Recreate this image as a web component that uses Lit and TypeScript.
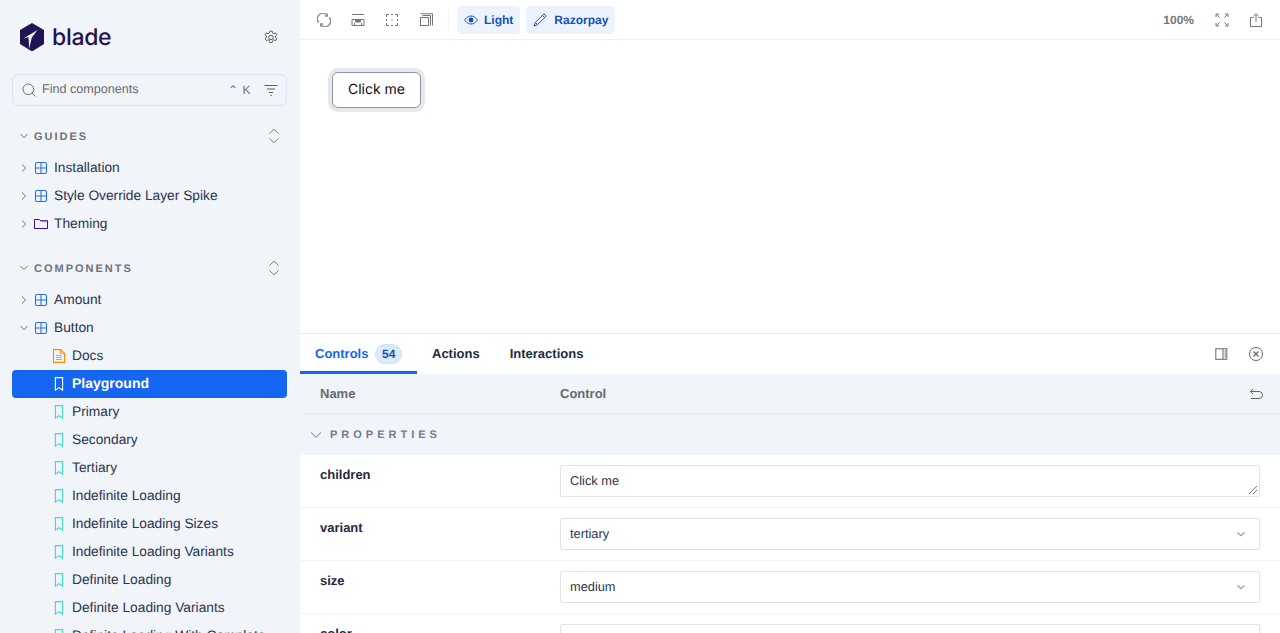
import { LitElement, html, css, svg } from "lit";
import { customElement } from "lit/decorators.js";

const chevR = html`<svg class="chev" width="10" height="10" viewBox="0 0 10 10"><path d="M3 1.500 6.600 5 3 8.500" fill="none" stroke="#6b7280" stroke-width="1"/></svg>`;
const chevD = html`<svg class="chev" width="10" height="10" viewBox="0 0 10 10"><path d="M1.500 3 5 6.600 8.500 3" fill="none" stroke="#6b7280" stroke-width="1"/></svg>`;
const grid = html`<svg class="ic" width="14" height="14" viewBox="0 0 14 14"><rect x="1.500" y="1.500" width="11" height="11" rx="1.500" fill="none" stroke="#2a6fe8" stroke-width="1.100"/><path d="M7 1.500v11M1.500 7h11" stroke="#2a6fe8" stroke-width="1.100"/></svg>`;
const folder = html`<svg class="ic" width="14" height="14" viewBox="0 0 14 14"><path d="M.5 2.500h5l1.200 1.400h6.800v7.600H.5z" fill="none" stroke="#3a0f9a" stroke-width="1"/><path d="M6 3.600h7.500" stroke="#3a0f9a" stroke-width=".6"/></svg>`;
const doc = html`<svg class="ic2" width="14" height="14" viewBox="0 0 14 14"><path d="M1.500 .6h7.100l3.900 3.600v9.200h-11z" fill="none" stroke="#ff8a00" stroke-width="1.100"/><path d="M8.400.8v3.500h4" fill="none" stroke="#ff8a00"/><path d="M4 6.500h6M4 8.500h6M4 10.500h6" stroke="#ff9d2e"/></svg>`;
const book = (c: string) => html`<svg class="ic2" width="14" height="14" viewBox="0 0 14 14"><path d="M3.400 .6h7.200v12.600L7 10.600l-3.600 2.600z" fill="none" stroke="${c}" stroke-width="1.100"/></svg>`;
const updown = html`<svg width="12" height="16" viewBox="0 0 12 16"><path d="M1.500 5.500 6 1.200l4.500 4.300M1.500 10.500 6 14.800l4.500-4.300" fill="none" stroke="#7a8089" stroke-width="1"/></svg>`;
const tbPath = (d: any) => html`<svg width="14" height="14" viewBox="0 0 14 14" fill="none" stroke="#73777d" stroke-width="1">${d}</svg>`;

const guides: [string, any][] = [["Installation", grid], ["Style Override Layer Spike", grid], ["Theming", folder]];
const stories = ["Primary","Secondary","Tertiary","Indefinite Loading","Indefinite Loading Sizes","Indefinite Loading Variants","Definite Loading","Definite Loading Variants","Definite Loading With Complete"];

@customElement("side-bar")
class SideBar extends LitElement {
  static styles = css`
    :host { display:block; width:300px; height:633px; box-sizing:border-box; padding:20px 13px 0 12px; background:#f1f4f9; overflow:hidden; flex:none; font-family:"Liberation Sans",Arial,sans-serif; color:#2a3550; text-rendering:geometricPrecision; }
    .logo { height:34px; display:flex; align-items:center; padding:0 8px; justify-content:space-between; }
    .brand { display:flex; align-items:center; gap:8px; }
    .word { font-family:Inter,sans-serif; font-size:23px; font-weight:500; color:#221452; letter-spacing:-.3px; line-height:34px; }
    .gear { display:flex; padding-top:1px; }
    .search { margin-top:20px; height:32px; box-sizing:border-box; border:1px solid #d9e5f5; border-radius:6px; display:flex; align-items:center; padding:0 8px; gap:5px; font-size:12.6px; color:#6d7278; }
    .search .ph { flex:1; color:#666c72; padding-bottom:2px; }
    .search .k { font-size:12px; margin-right:8px; color:#6d7278; letter-spacing:.5px; }
    .search svg { flex:none; }
    .sec { height:20px; box-sizing:border-box; padding:1px 7px 0; margin-top:20px; display:flex; align-items:center; font-size:11px; font-weight:700; letter-spacing:2px; color:#6f7378; gap:5px; }
    .sec svg { margin-top:-1px; }
    .sec.second { margin-top:21px; }
    .sec span { flex:1; }
    .list { margin-top:8px; margin-bottom:-1px; }
    .row { height:28px; box-sizing:border-box; display:flex; align-items:center; padding-left:7px; padding-bottom:2px; font-size:13.75px; color:#2a3550; }
    .row .chev { width:10px; margin-right:5px; flex:none; margin-top:2px; }
    .row .ic { margin-right:6px; flex:none; margin-top:2px; }
    .sub { padding-left:40px; gap:6px; }
    .sub svg { flex:none; margin-top:2px; }
    .row.act { background:#1566f0; color:#fff; font-size:14px; font-weight:700; border-radius:4px; }
  `;
  render() {
    return html`
      <div class="logo">
        <div class="brand">
          <svg width="24" height="28" viewBox="0 0 24 28"><path d="M12 0 24 7v14l-12 7.500L0 21V7z" fill="#221452"/><path d="M17.500 7 3.500 15.500l5-1.500L9 26l2.800-11.500z" fill="#f1f4f9"/><path d="M8.300 17 6 18l2.800 7z" fill="#221452"/></svg>
          <span class="word">blade</span>
        </div>
        <div class="gear"><svg width="16" height="16" viewBox="0 0 16 16" fill="none" stroke="#5d6268" stroke-width="1"><path d="M6.800 1.200h2.400l.4 1.900 1.300.6 1.700-.9 1.300 2-1.400 1.200v1.500l1.400 1.200-1.300 2-1.700-.9-1.300.8-.4 1.900H6.800l-.4-1.900-1.300-.8-1.700.9-1.300-2 1.400-1.200V6l-1.400-1.200 1.300-2 1.700.9 1.300-.6z"/><circle cx="8" cy="7.500" r="2.200"/></svg></div>
      </div>
      <div class="search">
        <svg width="16" height="16" viewBox="0 0 16 16" fill="none" stroke="#6d7278" stroke-width="1"><circle cx="7.300" cy="7.300" r="5.300"/><path d="m11 11 3.500 3.500"/></svg>
        <span class="ph">Find components</span>
        <span class="k">⌃ K</span>
        <svg width="14" height="14" viewBox="0 0 14 14" stroke="#5d6268" stroke-width="1"><path d="M.5 2.500h13M3 6h8M5 9.500h4M6.300 12.500h1.400"/></svg>
      </div>
      <div class="sec">${chevD}<span>GUIDES</span>${updown}</div>
      <div class="list">${guides.map(([t, i]) => html`<div class="row">${chevR}${i}${t}</div>`)}</div>
      <div class="sec second">${chevD}<span>COMPONENTS</span>${updown}</div>
      <div class="list">
        <div class="row">${chevR}${grid}Amount</div>
        <div class="row">${chevD}${grid}Button</div>
        <div class="row sub">${doc}Docs</div>
        <div class="row sub act">${book("#fff")}Playground</div>
        ${stories.map((s) => html`<div class="row sub">${book("#3fd8d0")}${s}</div>`)}
      </div>
    `;
  }
}

@customElement("app-root")
class AppRoot extends LitElement {
  static styles = css`
    :host { display:flex; width:1280px; height:633px; overflow:hidden; background:#fff; font-family:"Liberation Sans",Arial,sans-serif; text-rendering:geometricPrecision; }
    .main { flex:1; min-width:0; display:flex; flex-direction:column; }
    .bar { height:40px; box-sizing:border-box; border-bottom:1px solid #f1f1f1; display:flex; align-items:center; padding:0 17px; flex:none; }
    .tool { width:14px; height:14px; margin-right:20px; display:flex; flex:none; }
    .divider { width:1px; height:20px; background:#f3f3f3; margin:0 8px 0 -5px; }
    .pill { height:28px; display:flex; align-items:center; gap:6px; padding:0 7px; background:#ecf3fd; border-radius:4px; font-size:12px; font-weight:700; color:#1350bc; margin-right:6px; }
    .pill.r { gap:7px; padding-right:7px; }
    .sp { flex:1; }
    .zoom { font-size:12px; font-weight:700; color:#73777d; margin-right:21px; }
    .canvas { height:293px; flex:none; padding:32px; box-sizing:border-box; }
    .demo { display:inline-flex; align-items:center; justify-content:center; width:89px; height:36px; box-sizing:border-box; border:1px solid #8a95a6; border-radius:6px; font-family:Inter,sans-serif; font-size:14px; color:#0c0e12; box-shadow:0 0 0 4px #e6e8eb; background:#fff; padding-bottom:1px; }
    .panel { flex:1; min-height:0; border-top:1px solid #e9e9e9; overflow:hidden; }
    .tabs { height:40px; display:flex; align-items:stretch; font-size:13px; font-weight:700; color:#1f2a44; }
    .tab { display:flex; align-items:center; padding:0 15px; box-sizing:border-box; border-bottom:3px solid transparent; padding-top:1px; }
    .tab.on { color:#1566f0; border-bottom-color:#1566f0; width:117px; gap:6px; }
    .badge { background:#dbe9fb; color:#1350bc; font-size:12px; border-radius:10px; height:20px; width:27px; display:flex; align-items:center; justify-content:center; box-sizing:border-box; border:1px solid #cfe1f9; margin:1px 0 0 1px; }
    .tab-ic { display:flex; align-items:center; gap:20px; padding-right:17px; margin-left:auto; }
    .head { height:40px; background:#f1f4f9; box-sizing:border-box; display:grid; grid-template-columns:240px 1fr auto; align-items:center; padding:0 17px 0 20px; font-size:13px; font-weight:700; color:#666a70; border-bottom:1px solid #e8ebef; }
    .props { height:41px; background:#f1f4f9; display:flex; align-items:center; padding:0 0 0 10px; gap:8px; font-size:11px; font-weight:700; letter-spacing:4px; color:#737d8e; box-sizing:border-box; }
    .cr { height:53px; box-sizing:border-box; border-bottom:1px solid #f3f3f3; display:grid; grid-template-columns:240px 700px; padding:10px 0 0 20px; font-size:13px; }
    .cr b { font-weight:700; color:#1f2a44; line-height:18px; padding-top:1px; }
    .input { height:32px; box-sizing:border-box; border:1px solid #e3e3e3; border-radius:2px; display:flex; align-items:center; padding:0 9px 2px; font-size:12.8px; color:#2a3550; justify-content:space-between; position:relative; }
    .grip { position:absolute; right:1px; bottom:1px; }
    .input .cv { margin:2px 4px 0 0; }
  `;
  renderRow(name: string, value: string, kind: string) {
    return html`<div class="cr"><b>${name}</b><div class="input">${value}
      ${kind === "text" ? html`<svg class="grip" width="10" height="10" viewBox="0 0 10 10" stroke="#666" stroke-width=".9"><path d="M1 9 9 1M5 9l4-4"/></svg>` : ""}
      ${kind === "sel" ? html`<svg class="cv" width="10" height="10" viewBox="0 0 10 10"><path d="M1.500 3.500 5 6.800l3.500-3.300" fill="none" stroke="#9a9a9a" stroke-width="1.200"/></svg>` : ""}
    </div></div>`;
  }
  render() {
    return html`
      <side-bar></side-bar>
      <div class="main">
        <div class="bar">
          <span class="tool">${tbPath(svg`<g stroke="#8a8e93" stroke-width="1.300"><path d="M1.800 9.500A5.500 5.500 0 0 1 10 2M12.200 4.500A5.500 5.500 0 0 1 4 12"/><path d="M10.300 .5v2.500H7.800M3.700 13.500V11h2.500"/></g>`)}</span>
          <span class="tool">${tbPath(svg`<path d="M1 1.500h12M1 6.500h12v6H1zM3.500 10v2.500M10.500 10v2.500"/><path d="M4.500 6.500h5v2.500h-5z" fill="#73777d"/>`)}</span>
          <span class="tool">${tbPath(svg`<path d="M1.500 4V1.500H4M10 1.500h2.500V4M12.500 10v2.500H10M4 12.500H1.500V10M1.500 6v2M12.500 6v2M6 1.500h2M6 12.500h2"/><circle cx="7" cy="7" r=".7" fill="#73777d" stroke="none"/>`)}</span>
          <span class="tool">${tbPath(svg`<rect x="1.500" y="4.500" width="8" height="8"/><path d="M3.500 2.500h8v10M1.500 .8h12v11.700"/>`)}</span>
          <span class="divider"></span>
          <div class="pill"><svg width="14" height="14" viewBox="0 0 14 14"><path d="M.6 7S3 3 7 3s6.400 4 6.400 4S11 11 7 11 .6 7 .6 7z" fill="none" stroke="#1350bc"/><circle cx="7" cy="7" r="2.400" fill="#1350bc"/></svg>Light</div>
          <div class="pill r"><svg width="14" height="14" viewBox="0 0 14 14" fill="none" stroke="#1350bc" stroke-width="1"><path d="M11 .8 13.200 3 4.500 11.700 1 13l1.300-3.500z"/><path d="m9.500 2.500 2 2M2.500 9.500l2 2"/></svg>Razorpay</div>
          <span class="sp"></span>
          <span class="zoom">100%</span>
          <span class="tool">${tbPath(svg`<path d="M1 4V1h3M10 1h3v3M13 10v3h-3M4 13H1v-3M1.500 1.500l3 3M12.500 1.500l-3 3M12.500 12.500l-3-3M1.500 12.500l3-3"/>`)}</span>
          <span class="tool" style="margin-right:0">${tbPath(svg`<path d="M4.500 4.500H1.500v9h11v-9h-3M7 9V1M4.500 3 7 .8 9.500 3"/>`)}</span>
        </div>
        <div class="canvas"><div class="demo">Click me</div></div>
        <div class="panel">
          <div class="tabs">
            <div class="tab on">Controls <span class="badge">54</span></div>
            <div class="tab">Actions</div>
            <div class="tab">Interactions</div>
            <div class="tab-ic">
              <svg width="14" height="14" viewBox="0 0 14 14" fill="none" stroke="#666" stroke-width="1"><rect x=".8" y="1.800" width="11" height="10.500"/><path d="M8 1.800v10.500"/><path d="M9.500 4h1.500M9.500 6h1.500M9.500 8h1.500M9.500 10h1.500"/></svg>
              <svg width="14" height="14" viewBox="0 0 14 14" fill="none" stroke="#666" stroke-width="1"><circle cx="7" cy="7" r="6.500"/><path d="m4.500 4.500 5 5m0-5-5 5" stroke-width="1.300"/></svg>
            </div>
          </div>
          <div class="head"><span>Name</span><span>Control</span>
            <svg width="14" height="14" viewBox="0 0 14 14" fill="none" stroke="#666" stroke-width="1"><path d="M1.500 4.500h8.500a3 3 0 0 1 0 7H2"/><path d="M4 2 1.500 4.500 4 7"/></svg>
          </div>
          <div class="props"><svg width="12" height="10" viewBox="0 0 12 10"><path d="M1 2.500 6 7.200l5-4.700" fill="none" stroke="#737d8e"/></svg>PROPERTIES</div>
          ${this.renderRow("children", "Click me", "text")}
          ${this.renderRow("variant", "tertiary", "sel")}
          ${this.renderRow("size", "medium", "sel")}
          ${this.renderRow("color", "", "")}
        </div>
      </div>
    `;
  }
}
